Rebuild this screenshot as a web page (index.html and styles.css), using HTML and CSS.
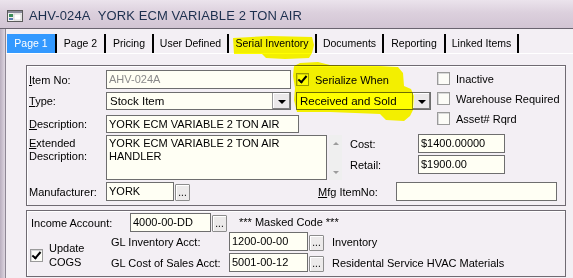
FILE: index.html
```html
<!DOCTYPE html>
<html lang="en">
<head>
    <meta charset="UTF-8">
    <title>AHV-024A YORK ECM VARIABLE 2 TON AIR</title>
    <link rel="stylesheet" href="styles.css">
</head>
<body>
    <div class="window">
        <div class="titlebar">
            <svg class="app-icon" width="16" height="12" viewBox="0 0 16 12">
                <rect x="0.5" y="0.5" width="15" height="11" fill="#f4f4f4" stroke="#5a5a5a"/>
                <rect x="1" y="1" width="14" height="2" fill="#8a8a9a"/>
                <rect x="2" y="4" width="4" height="3" fill="#3c8c5a"/>
                <rect x="2" y="8" width="4" height="2" fill="#5a7ab0"/>
                <rect x="7" y="4" width="7" height="6" fill="#ffffff" stroke="#b0b0b0" stroke-width="0.5"/>
            </svg>
            <span class="title">AHV-024A&nbsp; YORK ECM VARIABLE 2 TON AIR</span>
        </div>

        <div class="client">
            <div class="frame-left"></div>
            <div class="main">
                <div class="tabs">
                    <div class="tab active">Page 1</div>
                    <div class="tab">Page 2</div>
                    <div class="tab">Pricing</div>
                    <div class="tab">User Defined</div>
                    <div class="tab">Serial Inventory</div>
                    <div class="tab">Documents</div>
                    <div class="tab">Reporting</div>
                    <div class="tab">Linked Items</div>
                </div>

                <div class="page">
                    <!-- item details -->
                    <div class="group upper">
                        <div class="top-area">
                            <div class="left-col">
                                <div class="row row-item">
                                    <label class="lbl"><u>I</u>tem No:</label>
                                    <div class="field w185 disabled">AHV-024A</div>
                                    <div class="check serialize">
                                        <span class="box checked"></span>
                                        <span>Serialize When</span>
                                    </div>
                                </div>
                                <div class="row row-type">
                                    <label class="lbl"><u>T</u>ype:</label>
                                    <div class="select w185">
                                        <span class="select-text">Stock Item</span>
                                        <span class="drop"></span>
                                    </div>
                                    <div class="select w135 serial-select">
                                        <span class="select-text">Received and Sold</span>
                                        <span class="drop"></span>
                                    </div>
                                </div>
                                <div class="row row-desc">
                                    <label class="lbl"><u>D</u>escription:</label>
                                    <div class="field w193">YORK ECM VARIABLE 2 TON AIR</div>
                                </div>
                            </div>
                            <div class="check-col">
                                <div class="check"><span class="box"></span><span>Inactive</span></div>
                                <div class="check"><span class="box"></span><span>Warehouse Required</span></div>
                                <div class="check"><span class="box"></span><span>Asset# Rqrd</span></div>
                            </div>
                        </div>

                        <div class="row row-ext">
                            <label class="lbl two-line"><u>E</u>xtended<br>Description:</label>
                            <div class="memo">YORK ECM VARIABLE 2 TON AIR<br>HANDLER</div>
                            <div class="scroll">
                                <span class="arrow up"></span>
                                <span class="arrow down"></span>
                            </div>
                            <div class="prices">
                                <div class="price-row">
                                    <span class="price-lbl">Cost:</span>
                                    <div class="field w87">$1400.00000</div>
                                </div>
                                <div class="price-row">
                                    <span class="price-lbl">Retail:</span>
                                    <div class="field w87">$1900.00</div>
                                </div>
                            </div>
                        </div>

                        <div class="row row-manuf">
                            <label class="lbl">Manufacturer:</label>
                            <div class="field w68">YORK</div>
                            <button class="dots">...</button>
                            <label class="mfg-lbl"><u>M</u>fg ItemNo:</label>
                            <div class="field w161"></div>
                        </div>
                    </div>

                    <!-- accounting -->
                    <div class="group lower">
                        <div class="row row-income">
                            <label class="income-lbl">Income Account:</label>
                            <div class="field w81">4000-00-DD</div>
                            <button class="dots">...</button>
                            <span class="masked">*** Masked Code ***</span>
                        </div>
                        <div class="gl-area">
                            <div class="cogs">
                                <span class="box checked"></span>
                                <span class="cogs-text">Update<br>COGS</span>
                            </div>
                            <div class="gl-grid">
                                <label class="gl-lbl">GL Inventory Acct:</label>
                                <div class="field">1200-00-00</div>
                                <button class="dots">...</button>
                                <span class="gl-name">Inventory</span>

                                <label class="gl-lbl">GL Cost of Sales Acct:</label>
                                <div class="field">5001-00-12</div>
                                <button class="dots">...</button>
                                <span class="gl-name">Residental Service HVAC Materials</span>
                            </div>
                        </div>
                    </div>
                </div>
            </div>
        </div>

        <!-- highlighter marks drawn over the screen -->
        <svg class="marker" width="573" height="278" viewBox="0 0 573 278">
            <path d="M233 38 L270 36 L312 37 L314 45 L312 53 L309 58 L285 59 L266 58 L262 54 L234 54 Z" fill="#ffff00"/>
            <path d="M294 66 L300 63 L318 62 L330 65 L380 66 L398 67 L403 73 L404 86 L411 89 L414 96 L413 110 L410 116 L404 121 L386 120 L380 114 L330 112 L297 112 L294 100 L295 88 L293 76 Z" fill="#ffff00"/>
        </svg>
    </div>
</body>
</html>
```

FILE: styles.css
```css
* {
    box-sizing: border-box;
}

body {
    margin: 0;
    width: 573px;
    height: 278px;
    overflow: hidden;
    font-family: "Liberation Sans", Arial, sans-serif;
    font-size: 11px;
    color: #000;
    background: #f3eff4;
}

.window {
    position: relative;
    width: 573px;
    height: 278px;
}

.titlebar {
    height: 29px;
    display: flex;
    align-items: center;
    padding: 3px 0 0 7px;
    background: linear-gradient(to bottom, #ebe3ec 0%, #dcd0dd 45%, #d2c5d4 100%);
    border-bottom: 1px solid #6a6470;
}

.app-icon {
    margin-right: 6px;
}

.title {
    font-size: 13px;
    color: #1c2f4e;
    letter-spacing: 0.1px;
}

.client {
    display: flex;
    height: 249px;
}

.frame-left {
    width: 6px;
    background: linear-gradient(to right, #b9afbf, #cfc6d3 60%, #ddd6e0);
    border-right: 1px solid #8e8794;
}

.main {
    flex: 1;
    background: #f3eff4;
}

/* tab strip */
.tabs {
    display: flex;
    margin-top: 5px;
    padding-left: 1px;
    border-bottom: 1px solid #ffffff;
}

.tab {
    height: 19px;
    line-height: 18px;
    padding: 0;
    text-align: center;
    white-space: nowrap;
    font-size: 10.5px;
    border-right: 2px solid #000;
}

.tab:nth-child(1) { width: 50px; }
.tab:nth-child(2) { width: 49px; }
.tab:nth-child(3) { width: 48px; }
.tab:nth-child(4) { width: 75px; }
.tab:nth-child(5) { width: 88px; }
.tab:nth-child(6) { width: 67px; }
.tab:nth-child(7) { width: 62px; }
.tab:nth-child(8) { width: 73px; }

.tab.active {
    background: #3399ff;
    color: #fff;
}

.page {
    padding: 11px 0 0 20px;
}

/* group boxes */
.group {
    width: 540px;
    border: 1px solid #6f6a72;
    box-shadow: inset 1px 1px 0 #ffffff;
}

.upper {
    height: 141px;
    padding-top: 4px;
}

.lower {
    margin-top: 4px;
    height: 67px;
    padding-top: 1px;
}

.row {
    display: flex;
    align-items: center;
}

.lbl {
    width: 79px;
    padding-left: 2px;
    flex-shrink: 0;
}

.two-line {
    align-self: flex-start;
    line-height: 13px;
    padding-top: 2px;
}

/* input boxes */
.field {
    height: 19px;
    line-height: 17px;
    padding-left: 2px;
    background: #fffff4;
    border: 1px solid #6e6e6e;
    white-space: nowrap;
    overflow: hidden;
    flex-shrink: 0;
}

.field.disabled {
    color: #8a8a8a;
}

.w185 { width: 185px; }
.w193 { width: 193px; height: 18px; line-height: 16px; }
.w135 { width: 135px; }
.w87 { width: 87px; }
.w68 { width: 68px; }
.w161 { width: 161px; }
.w81 { width: 81px; }

.select {
    display: flex;
    height: 18px;
    background: #fffff4;
    border: 1px solid #6e6e6e;
    flex-shrink: 0;
}

.select-text {
    flex: 1;
    line-height: 16px;
    padding-left: 3px;
    font-size: 11.5px;
}

.drop {
    width: 18px;
    position: relative;
    background: #ebe9ea;
    border-left: 1px solid #9a9a9a;
    box-shadow: inset -1px -1px 0 #808080, inset 1px 1px 0 #ffffff;
}

.drop::after {
    content: "";
    position: absolute;
    left: 5px;
    top: 7px;
    border-left: 4px solid transparent;
    border-right: 4px solid transparent;
    border-top: 4px solid #000;
}

.serial-select {
    margin-left: 5px;
}

/* check boxes */
.check {
    display: flex;
    align-items: center;
    height: 13px;
}

.box {
    width: 13px;
    height: 13px;
    flex-shrink: 0;
    background: #fcfcf7;
    border: 1px solid #9a9a9a;
    box-shadow: inset 1px 1px 0 #d8d8d8;
    position: relative;
}

.box.checked::after {
    content: "";
    position: absolute;
    left: 3px;
    top: 0px;
    width: 3px;
    height: 7px;
    border-right: 2px solid #000;
    border-bottom: 2px solid #000;
    transform: rotate(40deg);
}

.check .box {
    margin-right: 6px;
}

.serialize {
    margin-left: 5px;
}

.row-item { height: 19px; }
.row-type { margin-top: 3px; }
.row-desc { margin-top: 5px; }

.top-area {
    display: flex;
}

.left-col {
    width: 404px;
}

.check-col {
    margin-left: 6px;
    padding-top: 2px;
    display: flex;
    flex-direction: column;
    gap: 7px;
}

/* extended description */
.row-ext {
    margin-top: 2px;
    align-items: flex-start;
}

.memo {
    width: 221px;
    height: 45px;
    padding: 1px 2px;
    line-height: 13px;
    background: #fffff4;
    border: 1px solid #6e6e6e;
}

.scroll {
    width: 13px;
    height: 45px;
    margin-left: 2px;
    background: #efefef;
    display: flex;
    flex-direction: column;
    justify-content: space-between;
    align-items: center;
    padding: 7px 0 6px;
}

.arrow {
    width: 0;
    height: 0;
    border-left: 3px solid transparent;
    border-right: 3px solid transparent;
}

.arrow.up { border-bottom: 3px solid #9c9c9c; }
.arrow.down { border-top: 3px solid #9c9c9c; }

.prices {
    margin-left: 8px;
    margin-top: -1px;
    display: flex;
    flex-direction: column;
    gap: 2px;
}

.price-row {
    display: flex;
    align-items: center;
}

.price-lbl {
    width: 68px;
}

/* manufacturer */
.row-manuf {
    margin-top: 2px;
}

.dots {
    width: 15px;
    height: 17px;
    margin-left: 1px;
    padding: 0 0 2px;
    align-self: flex-end;
    font-family: "Liberation Sans", Arial, sans-serif;
    font-size: 10px;
    line-height: 10px;
    display: flex;
    align-items: flex-end;
    justify-content: center;
    background: #eceaea;
    border: 1px solid #8c8c8c;
    box-shadow: inset 1px 1px 0 #ffffff;
    border-radius: 1px;
    color: #000;
}

.mfg-lbl {
    margin-left: 128px;
    width: 78px;
}

/* accounting */
.row-income {
    margin-top: 1px;
}

.income-lbl {
    width: 103px;
    padding-left: 4px;
}

.masked {
    margin-left: 12px;
    padding-bottom: 2px;
}

.gl-area {
    display: flex;
}

.cogs {
    width: 84px;
    display: flex;
    align-items: center;
    padding-left: 3px;
    padding-top: 6px;
}

.cogs-text {
    margin-left: 6px;
    line-height: 14px;
}

.gl-grid {
    display: grid;
    grid-template-columns: 118px 79px 17px auto;
    row-gap: 2px;
    align-items: center;
}

.gl-grid .dots {
    margin-left: 1px;
    height: 16px;
}

.gl-name {
    margin-left: 7px;
}

/* highlighter */
.marker {
    position: absolute;
    top: 0;
    left: 0;
    pointer-events: none;
    mix-blend-mode: multiply;
}
```
